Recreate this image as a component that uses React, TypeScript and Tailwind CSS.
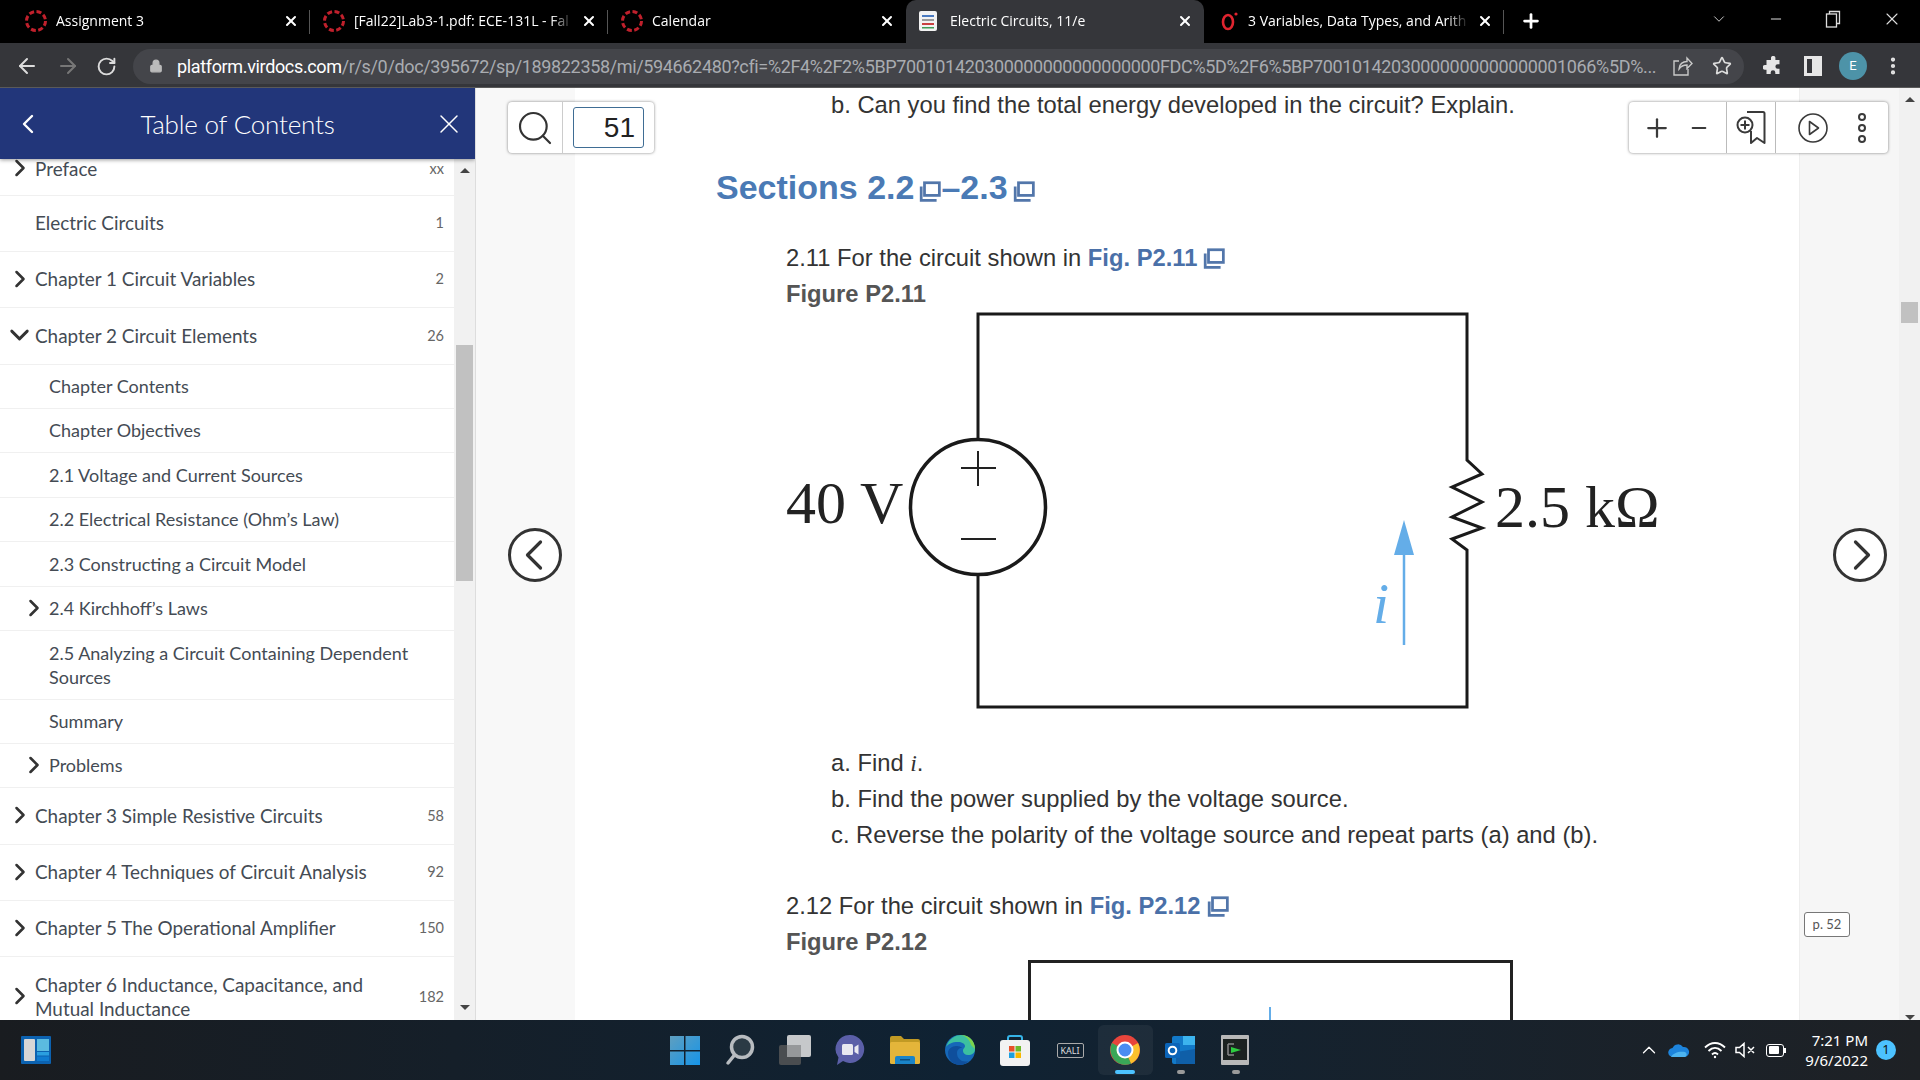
import React from "react";
import {
  ArrowLeft,
  ArrowRight,
  ChevronDown,
  ChevronLeft,
  ChevronRight,
  ChevronUp,
  EllipsisVertical,
  Lock,
  Minus,
  Plus,
  RotateCw,
  Search,
  Star,
  X,
} from "lucide-react";

type TocRow = {
  title: React.ReactNode;
  page?: string;
  sub?: boolean;
  chevron?: "right" | "down";
  rowClass: string;
};

const tocRows: TocRow[] = [
  { title: "Preface", page: "xx", chevron: "right", rowClass: "h-[37px] pb-[17px] leading-[18px]!" },
  { title: "Electric Circuits", page: "1", rowClass: "h-[56px]" },
  { title: "Chapter 1 Circuit Variables", page: "2", chevron: "right", rowClass: "h-[56px]" },
  { title: "Chapter 2 Circuit Elements", page: "26", chevron: "down", rowClass: "h-[57px]" },
  { title: "Chapter Contents", sub: true, rowClass: "h-[44px]" },
  { title: "Chapter Objectives", sub: true, rowClass: "h-[44px]" },
  { title: "2.1 Voltage and Current Sources", sub: true, rowClass: "h-[45px]" },
  { title: "2.2 Electrical Resistance (Ohm’s Law)", sub: true, rowClass: "h-[44px]" },
  { title: "2.3 Constructing a Circuit Model", sub: true, rowClass: "h-[45px]" },
  { title: "2.4 Kirchhoff’s Laws", sub: true, chevron: "right", rowClass: "h-[44px]" },
  { title: "2.5 Analyzing a Circuit Containing Dependent Sources", sub: true, rowClass: "h-[69px]" },
  { title: "Summary", sub: true, rowClass: "h-[44px]" },
  { title: "Problems", sub: true, chevron: "right", rowClass: "h-[44px]" },
  { title: "Chapter 3 Simple Resistive Circuits", page: "58", chevron: "right", rowClass: "h-[57px]" },
  { title: "Chapter 4 Techniques of Circuit Analysis", page: "92", chevron: "right", rowClass: "h-[56px]" },
  { title: "Chapter 5 The Operational Amplifier", page: "150", chevron: "right", rowClass: "h-[56px]" },
  { title: "Chapter 6 Inductance, Capacitance, and Mutual Inductance", page: "182", chevron: "right", rowClass: "h-[81px]" },
];

const CanvasIcon = () => (
  <svg width="24" height="24" viewBox="0 0 24 24" fill="none">
    <circle cx="12" cy="12" r="9.5" stroke="#c0202c" strokeWidth="3" strokeDasharray="5 2.5" />
  </svg>
);

const DocIcon = () => (
  <svg width="20" height="24" viewBox="0 0 20 24">
    <rect x="1" y="2" width="18" height="20" rx="2" fill="#f2f2f2" />
    <rect x="4" y="6" width="12" height="2" fill="#4a7ac0" />
    <rect x="4" y="10" width="12" height="2" fill="#9a9a9a" />
    <rect x="4" y="14" width="12" height="2" fill="#c94040" />
    <rect x="4" y="18" width="12" height="1.5" fill="#3f9a55" />
  </svg>
);

const OperaIcon = () => (
  <svg width="22" height="24" viewBox="0 0 22 24" fill="none" className="ml-[4px]">
    <ellipse cx="8" cy="13" rx="5" ry="7" stroke="#e0242f" strokeWidth="2.6" />
    <circle cx="16" cy="5" r="1.6" fill="#e0242f" />
  </svg>
);

function Tab({
  icon,
  title,
  active,
  separator,
  className,
}: {
  icon: React.ReactNode;
  title: string;
  active?: boolean;
  separator?: boolean;
  className?: string;
}) {
  return (
    <div
      className={`relative flex h-[43px] w-[298px] shrink-0 items-center pb-[2px] pl-[12px] pr-[11px] ${
        active ? "rounded-t-[10px] bg-[#35363a]" : ""
      } ${className ?? ""}`}
    >
      <div className="flex w-[32px] shrink-0 items-center">{icon}</div>
      <div className="min-w-0 flex-1 overflow-hidden whitespace-nowrap text-[14px] text-white [mask-image:linear-gradient(to_right,black_90%,transparent)]">
        {title}
      </div>
      <X size={16} strokeWidth={3} className="ml-[8px] shrink-0 text-white" />
      {separator && <div className="absolute right-0 top-[10px] h-[24px] w-px bg-[#555]" />}
    </div>
  );
}

function TabStrip() {
  return (
    <div className="flex h-[43px] shrink-0 items-start bg-black pl-[12px] font-['Open_Sans',sans-serif]">
      <Tab icon={<CanvasIcon />} title="Assignment 3" separator />
      <Tab icon={<CanvasIcon />} title="[Fall22]Lab3-1.pdf: ECE-131L - Fal" separator />
      <Tab icon={<CanvasIcon />} title="Calendar" />
      <Tab icon={<DocIcon />} title="Electric Circuits, 11/e" active />
      <Tab icon={<OperaIcon />} title="3 Variables, Data Types, and Arith" separator className="w-[300px]" />
      <div className="flex h-[43px] w-[54px] items-center justify-center pb-[2px]">
        <Plus size={22} strokeWidth={3} className="text-white" />
      </div>
      <div className="ml-auto flex h-[38px] items-center pr-[18px] text-[#ddd]">
        <ChevronDown size={18} strokeWidth={1.2} className="mr-[40px]" />
        <Minus size={16} strokeWidth={1.5} className="mr-[41px]" />
        <svg width="16" height="18" viewBox="0 0 16 18" fill="none" stroke="currentColor" className="mr-[41px]" strokeWidth="1.3">
          <rect x="1.5" y="4" width="10" height="13" />
          <path d="M4.5 4V1.5h10v12h-3" />
        </svg>
        <X size={20} strokeWidth={1.3} />
      </div>
    </div>
  );
}

function AddressBar() {
  return (
    <div className="flex h-[45px] shrink-0 items-center border-b border-[#5a5a5a] bg-[#35363a] pl-[15px] pt-[2px] font-['Roboto',sans-serif]">
      <ArrowLeft size={24} strokeWidth={2} className="mr-[17px] text-[#dcdcdc]" />
      <ArrowRight size={24} strokeWidth={2} className="mr-[16px] text-[#777]" />
      <RotateCw size={21} strokeWidth={2.2} className="text-[#dcdcdc]" />
      <div className="ml-[16px] flex h-[35px] w-[1611px] items-center overflow-hidden rounded-full bg-[#44454a] pl-[16px] pr-[8px]">
        <Lock size={14} fill="#bbb" strokeWidth={2} className="mr-[14px] shrink-0 text-[#bbb]" />
        <div className="w-[1480px] shrink-0 whitespace-nowrap text-[18px] tracking-[-0.35px] text-[#a9acb1]">
          <span className="text-white">platform.virdocs.com</span>
          /r/s/0/doc/395672/sp/189822358/mi/594662480?cfi=%2F4%2F2%5BP700101420300000000000000000FDC%5D%2F6%5BP70010142030000000000000001066%5D%...
        </div>
        <svg width="22" height="22" viewBox="0 0 22 22" fill="none" stroke="#c9c9c9" strokeWidth="1.4" className="ml-[14px] shrink-0">
          <path d="M8 6H3v14h14v-6" />
          <path d="M8 14c0-5 4-7.500 8-7.500V3l5 5.500-5 5V10c-4 0-6 1-8 4z" />
        </svg>
        <Star size={20} strokeWidth={2} className="ml-[19px] shrink-0 text-[#dcdcdc]" />
      </div>
      <svg width="20" height="20" viewBox="0 0 20 20" className="ml-[19px] text-[#e6e6e6]" fill="currentColor">
        <path d="M8 1.5a2.3 2.3 0 0 1 4.4 0V4h4.1v4.2h-1.8a2.3 2.3 0 0 0 0 4.6h1.8V18H12.300v-1.500a2.300 2.300 0 0 0-4.600 0V18H3.500v-4.300H2a2.300 2.300 0 0 1 0-4.600h1.500V4H8z" />
      </svg>
      <div className="ml-[21px] flex h-[20px] w-[18px] justify-end border-[3px] border-[#e6e6e6]">
        <div className="h-full w-[7px] bg-[#e6e6e6]" />
      </div>
      <div className="ml-[17px] flex h-[28px] w-[28px] items-center justify-center rounded-full bg-[#4d93a8] text-[13px] text-white">E</div>
      <EllipsisVertical size={22} strokeWidth={2.6} className="ml-[15px] text-[#e6e6e6]" />
    </div>
  );
}

function Sidebar() {
  return (
    <aside className="flex w-[476px] shrink-0 flex-col overflow-hidden border-r border-[#ddd] bg-white font-['Lato',sans-serif]">
      <div className="relative z-10 flex h-[71px] shrink-0 items-center justify-between bg-[#22367a] pl-[12px] pr-[10px] text-white shadow-[0_1px_4px_rgba(0,0,0,0.4)]">
        <ChevronLeft size={32} strokeWidth={1.8} />
        <div className="pr-[2px] pt-[2px] text-[26px] font-light tracking-[-0.2px]">Table of Contents</div>
        <X size={32} strokeWidth={1.1} />
      </div>
      <div className="flex min-h-0 flex-1">
        <div className="min-w-0 flex-1 overflow-hidden">
          {tocRows.map((row, i) => (
            <div
              key={i}
              className={`flex items-center border-b border-[#f0f0f0] pr-[10px] leading-[24.500px] text-[#444b54] ${row.rowClass} ${
                row.sub ? "pl-[18px] text-[18px]" : "pl-[4px] text-[18.900px]"
              }`}
            >
              <div className="flex w-[31px] shrink-0 justify-center text-[#333]">
                {row.chevron === "right" && <ChevronRight size={28} strokeWidth={2.2} className="-mt-[2px]" />}
                {row.chevron === "down" && <ChevronDown size={32} strokeWidth={2.2} className="-mt-[2px]" />}
              </div>
              <div className={`flex-1 ${row.sub ? "pr-[30px]" : "pr-[40px]"}`}>{row.title}</div>
              {row.page && <div className="text-[14.500px] text-[#666]">{row.page}</div>}
            </div>
          ))}
        </div>
        <div className="flex w-[21px] shrink-0 flex-col items-center bg-[#f1f1f1]">
          <div className="mt-[9px] h-0 w-0 border-x-[5px] border-b-[5px] border-x-transparent border-b-[#444]" />
          <div className="mt-[172px] h-[236px] w-[17px] bg-[#c1c1c1]" />
          <div className="mt-[424px] h-0 w-0 border-x-[5px] border-t-[5px] border-x-transparent border-t-[#444]" />
        </div>
      </div>
    </aside>
  );
}

const LinkBox = ({ size = 22, gap = "ml-[6px]" }: { size?: number; gap?: string }) => (
  <svg width={size} height={size} viewBox="0 0 20 20" fill="none" className={`${gap} inline-block align-[-3px]`} stroke="#5276aa">
    <path d="M2 6v12.500h14" strokeWidth="2.500" />
    <rect x="5" y="2.500" width="13.500" height="11.500" strokeWidth="2.500" />
  </svg>
);

function CircuitFigure() {
  return (
    <svg width="900" height="400" viewBox="786 312 900 400" className="block">
      <path
        d="M978 314H1467V460l15 14-30 13 30 15-30 15 30 11-30 11 15 11V707H978Z"
        fill="none"
        stroke="#1a1a1a"
        strokeWidth="3"
      />
      <circle cx="978" cy="507" r="67.500" fill="white" stroke="#1a1a1a" strokeWidth="3.500" />
      <path d="M978 451v35M961 468h35M961 539h35" stroke="#222" strokeWidth="2" />
      <path d="M1404 555v90" stroke="#64ade8" strokeWidth="2.500" />
      <path d="M1404 520l10 35h-20z" fill="#64ade8" />
      <text x="786" y="523" fontFamily="'Liberation Serif', serif" fontSize="60" fill="#222">40 V</text>
      <text x="1495" y="527" fontFamily="'Liberation Serif', serif" fontSize="60" fill="#222">2.5 kΩ</text>
      <text x="1373" y="623" fontFamily="'Liberation Serif', serif" fontStyle="italic" fontSize="58" fill="#64ade8">i</text>
    </svg>
  );
}

function ReaderPage() {
  return (
    <div className="relative min-w-0 flex-1 overflow-hidden font-['Liberation_Sans',Arial,sans-serif]">
      <div className="absolute inset-y-0 left-0 w-[99px] bg-[#f8f8f8]" />
      <div className="absolute inset-y-0 right-0 w-[121px] border-l border-[#eee] bg-[#f6f6f6]">
        <div className="absolute inset-y-0 right-0 flex w-[21px] flex-col items-center bg-[#f1f1f1]">
          <div className="mt-[9px] h-0 w-0 border-x-[5px] border-b-[5px] border-x-transparent border-b-[#444]" />
          <div className="mt-[200px] h-[26px] w-[17px] bg-[#c1c1c1]" />
          <div className="mt-[692px] h-0 w-0 border-x-[5px] border-t-[5px] border-x-transparent border-t-[#444]" />
        </div>
      </div>

      <div className="relative ml-[99px] flex h-full flex-col text-[23.750px] leading-[36px] text-[#333]">
        <p className="-mt-[1px] ml-[256px]">b. Can you find the total energy developed in the circuit? Explain.</p>
        <h2 className="ml-[141px] mt-[46px] text-[34px] font-bold leading-[36px] text-[#4a7ab5]">
          Sections 2.2
          <LinkBox size={22} gap="ml-[5px]" />–2.3
          <LinkBox size={22} gap="ml-[5px]" />
        </h2>
        <div className="ml-[211px] mt-[35px]">
          <p>
            2.11 For the circuit shown in <b className="text-[#4a70a8]">Fig. P2.11</b>
            <LinkBox />
          </p>
          <p className="font-bold text-[#555]">Figure P2.11</p>
          <CircuitFigure />
        </div>
        <div className="ml-[256px] mt-[33px]">
          <p>
            a. Find <i className="font-['Liberation_Serif',serif]">i</i>.
          </p>
          <p>b. Find the power supplied by the voltage source.</p>
          <p>c. Reverse the polarity of the voltage source and repeat parts (a) and (b).</p>
        </div>
        <div className="ml-[211px] mt-[35px]">
          <p>
            2.12 For the circuit shown in <b className="text-[#4a70a8]">Fig. P2.12</b>
            <LinkBox />
          </p>
          <p className="font-bold text-[#555]">Figure P2.12</p>
          <div className="relative ml-[242px] h-[100px] w-[485px] border-[3px] border-[#222] border-b-0">
            <div className="absolute left-[238px] top-[44px] h-[60px] w-[2px] bg-[#64ade8]" />
          </div>
        </div>
      </div>

      {/* floating reader controls */}
      <div className="absolute left-[32px] top-[14px] flex h-[51px] w-[146px] items-center rounded-[4px] bg-white shadow-[0_0_3px_rgba(0,0,0,0.5)]">
        <div className="flex h-full w-[55px] items-center justify-center border-r border-[#ccc]">
          <Search size={40} strokeWidth={1.3} className="text-[#333]" />
        </div>
        <div className="ml-[10px] flex h-[41px] w-[71px] items-center justify-end rounded-[3px] border border-[#3f6d94] pr-[8px] text-[28px] text-[#222]">51</div>
      </div>

      <div className="absolute left-[1153px] top-[14px] flex h-[51px] w-[259px] items-center rounded-[4px] bg-white text-[#3a3a3a] shadow-[0_0_3px_rgba(0,0,0,0.5)]">
        <div className="flex h-full w-[98px] items-center justify-center gap-[16px] border-r border-[#bbb] pr-[4px]">
          <Plus size={30} strokeWidth={1.8} />
          <Minus size={22} strokeWidth={2} />
        </div>
        <div className="flex h-full w-[49px] items-center justify-center border-r border-[#bbb]">
          <svg width="30" height="36" viewBox="0 0 30 36" fill="none" stroke="currentColor" strokeWidth="2" strokeLinejoin="round">
            <path d="M11 2h16a1.500 1.500 0 0 1 1.500 1.500V33l-7.500-5-6 5V21" />
            <circle cx="9" cy="15" r="7.500" fill="white" />
            <path d="M4.500 15h9M9 10.500v9" />
          </svg>
        </div>
        <div className="flex flex-1 items-center pl-[22px]">
          <svg width="30" height="30" viewBox="0 0 30 30" fill="none" stroke="currentColor" strokeWidth="1.600">
            <circle cx="15" cy="15" r="14" />
            <path d="M11.500 8.500v13l9-6.500z" strokeLinejoin="round" />
          </svg>
          <div className="ml-[30px] flex flex-col gap-[3px]">
            <div className="h-[8px] w-[8px] rounded-full border-2 border-current" />
            <div className="h-[8px] w-[8px] rounded-full border-2 border-current" />
            <div className="h-[8px] w-[8px] rounded-full border-2 border-current" />
          </div>
        </div>
      </div>

      <button className="absolute left-[32px] top-[440px] flex h-[54px] w-[54px] items-center justify-center rounded-full border-[3px] border-[#333] bg-white text-[#333]">
        <ChevronLeft size={52} strokeWidth={1.5} className="-ml-[3px] shrink-0" />
      </button>
      <button className="absolute left-[1357px] top-[440px] flex h-[54px] w-[54px] items-center justify-center rounded-full border-[3px] border-[#333] bg-white text-[#333]">
        <ChevronRight size={52} strokeWidth={1.5} className="ml-[3px] shrink-0" />
      </button>
      <div className="absolute left-[1328px] top-[824px] flex h-[25px] w-[46px] items-center justify-center rounded-[3px] border border-[#777] bg-white font-['Lato',sans-serif] text-[13px] text-[#555]">
        p. 52
      </div>
    </div>
  );
}

function TaskIcon({ children, active, dot }: { children: React.ReactNode; active?: boolean; dot?: boolean }) {
  return (
    <div className={`relative flex h-[50px] w-[55px] items-center justify-center ${active ? "rounded-[6px] bg-white/5" : ""}`}>
      {children}
      {active && <div className="absolute bottom-[1px] left-[17px] h-[4px] w-[20px] rounded-full bg-[#4cc2ff]" />}
      {dot && <div className="absolute bottom-[1px] left-[24px] h-[4px] w-[8px] rounded-full bg-[#9a9a9a]" />}
    </div>
  );
}

function Taskbar() {
  return (
    <div className="grid h-[60px] shrink-0 grid-cols-[1fr_auto_1fr] items-center bg-gradient-to-r from-[#191c20] via-[#0f2233] to-[#1e2125] font-['Noto_Sans',sans-serif]">
      <div className="pl-[21px]">
        <svg width="30" height="28" viewBox="0 0 30 28">
          <rect width="30" height="28" rx="1" fill="#0c62b0" />
          <rect x="3" y="3" width="11" height="22" rx="1" fill="#d6d6d6" />
          <rect x="16" y="3" width="12" height="12" fill="#5bbbe0" />
          <rect x="16" y="16" width="12" height="3.500" fill="#2a9fe0" />
          <rect x="16" y="20.500" width="12" height="4.500" fill="#0f7bd0" />
        </svg>
      </div>
      <div className="flex items-center">
        <TaskIcon>
          <svg width="30" height="30" viewBox="0 0 30 30">
            <defs>
              <linearGradient id="winGrad" x1="0" y1="0" x2="1" y2="1">
                <stop offset="0" stopColor="#5f9fc0" />
                <stop offset="1" stopColor="#1594e8" />
              </linearGradient>
            </defs>
            <path d="M0 1h14v14H0zM15.500 1H30v14H15.500zM0 16.500h14V30.500H0zM15.500 16.500H30V30.500H15.500z" fill="url(#winGrad)" />
          </svg>
        </TaskIcon>
        <TaskIcon>
          <svg width="30" height="32" viewBox="0 0 30 32" fill="none" stroke="#b8bcc0" strokeWidth="3.500">
            <circle cx="17" cy="13" r="10.500" fill="#2b3a45" />
            <path d="M9.500 21L3 29" strokeLinecap="round" />
          </svg>
        </TaskIcon>
        <TaskIcon>
          <svg width="32" height="30" viewBox="0 0 32 30">
            <rect x="0" y="10" width="22" height="20" rx="2" fill="#4a4d50" />
            <rect x="8" y="0" width="24" height="22" rx="2" fill="#c6c8ca" />
            <rect x="8" y="10" width="14" height="12" fill="#96989a" />
          </svg>
        </TaskIcon>
        <TaskIcon>
          <svg width="30" height="32" viewBox="0 0 30 32">
            <path d="M15 1a14 14 0 1 1-7 26l-6 4 1.500-7.500A14 14 0 0 1 15 1z" fill="#5b5fa8" />
            <rect x="7" y="10" width="11" height="11" rx="1.500" fill="#e8e8f0" />
            <path d="M19.500 13l4-2.500v10l-4-2.500z" fill="#e8e8f0" />
          </svg>
        </TaskIcon>
        <TaskIcon>
          <svg width="30" height="28" viewBox="0 0 30 28">
            <path d="M0 2a2 2 0 0 1 2-2h9l3 3h14a2 2 0 0 1 2 2v3H0z" fill="#c19a24" />
            <rect y="6" width="30" height="22" rx="1.500" fill="#e4b53a" />
            <path d="M5 28v-6a2 2 0 0 1 2-2h16a2 2 0 0 1 2 2v6z" fill="#1a84c8" />
            <rect x="10" y="23" width="10" height="1.500" fill="#0c4f80" />
          </svg>
        </TaskIcon>
        <TaskIcon>
          <svg width="30" height="30" viewBox="0 0 30 30">
            <circle cx="15" cy="15" r="15" fill="#1668b8" />
            <path d="M1 12C4 3 11 0 16 0c8 0 14 6 14 14 0 4-3 6-7 6-3 0-5-2-5-4 0-3 2-3 2-5s-3-4-7-4C7 7 3 9 1 12z" fill="#3cc0a0" />
            <path d="M30 14c0-8-6-14-14-14 5 1 9 5 10 10l4 4z" fill="#7dd34b" />
            <path d="M12 18c0 6 5 10 12 8-3 2.500-6 4-9 4C8 30 3 25 3 18c0-4 4-7 8-7 3 0 6 1 6 2-3 0-5 2-5 5z" fill="#0f4f9c" />
          </svg>
        </TaskIcon>
        <TaskIcon>
          <svg width="30" height="32" viewBox="0 0 30 32">
            <path d="M8 7V4a2 2 0 0 1 2-2h10a2 2 0 0 1 2 2v3" fill="none" stroke="#35b4e8" strokeWidth="2" />
            <rect y="6" width="30" height="26" rx="3" fill="#f2f2f2" />
            <rect x="9" y="12" width="5.500" height="5.500" fill="#e8502a" />
            <rect x="15.500" y="12" width="5.500" height="5.500" fill="#6cb82c" />
            <rect x="9" y="18.500" width="5.500" height="5.500" fill="#1c9fe0" />
            <rect x="15.500" y="18.500" width="5.500" height="5.500" fill="#f8b800" />
          </svg>
        </TaskIcon>
        <TaskIcon>
          <div className="flex h-[15px] w-[27px] items-center justify-center rounded-[2px] border border-[#aaa] text-[9px] leading-none text-[#ddd]">KALI</div>
        </TaskIcon>
        <TaskIcon active>
          <svg width="30" height="30" viewBox="0 0 30 30" className="-mt-[1px]">
            <circle cx="15" cy="15" r="15" fill="#e8453c" />
            <path d="M15 15L28 8a15 15 0 0 1-7 20.700z" fill="#fbc02d" />
            <path d="M15 15L21 28.700A15 15 0 0 1 2 8z" fill="#3aa757" />
            <circle cx="15" cy="15" r="7.500" fill="#4a8cf0" stroke="white" strokeWidth="2" />
          </svg>
        </TaskIcon>
        <TaskIcon dot>
          <svg width="30" height="30" viewBox="0 0 30 30">
            <rect x="7" y="1" width="23" height="28" rx="2" fill="#1279c8" />
            <rect x="18" y="1" width="12" height="9" fill="#3cb4ee" />
            <path d="M11 17l19-3v15H11z" fill="#0f5fa8" />
            <rect x="0" y="8" width="15" height="15" rx="1.500" fill="#0b64b8" />
            <circle cx="7.500" cy="15.500" r="3.800" fill="none" stroke="white" strokeWidth="2" />
          </svg>
        </TaskIcon>
        <TaskIcon dot>
          <svg width="28" height="30" viewBox="0 0 28 30">
            <rect width="28" height="30" rx="1" fill="#b8b8b8" />
            <rect x="2" y="4" width="24" height="21" fill="#1c2220" />
            <path d="M7 9v11M7 9h6M7 20h6" stroke="#888" strokeWidth="1.500" fill="none" />
            <path d="M10 12l10 3-10 3z" fill="#2ecc40" />
          </svg>
        </TaskIcon>
      </div>
      <div className="flex items-center justify-end pr-[24px] text-white">
        <ChevronUp size={22} strokeWidth={1.4} />
        <svg width="22" height="14" viewBox="0 0 22 14" className="ml-[8px]">
          <path d="M5 14a4.500 4.500 0 0 1-.5-9A6 6 0 0 1 15 4a4.500 4.500 0 0 1 2 10z" fill="#1d84dc" />
          <path d="M3 14c2-4 8-6 14-5a2.700 2.700 0 0 1 0 5z" fill="#4db4f0" />
        </svg>
        <svg width="22" height="18" viewBox="0 0 22 18" fill="none" stroke="white" strokeWidth="1.800" className="ml-[14px]">
          <path d="M1 6.500c6-6 14-6 20 0M4.500 10c4-4 9-4 13 0M8 13.500c2-2 4-2 6 0" />
          <circle cx="11" cy="16" r="1.200" fill="white" stroke="none" />
        </svg>
        <svg width="20" height="16" viewBox="0 0 20 16" fill="none" stroke="white" strokeWidth="1.500" className="ml-[9px]">
          <path d="M1 5.500h3.500L9 1.500v13l-4.500-4H1zM13 5l6 6M19 5l-6 6" />
        </svg>
        <div className="ml-[11px] flex h-[13px] w-[18px] items-center rounded-[3px] border-[1.500px] border-white p-[1.500px]">
          <div className="h-full w-[10px] rounded-[1px] bg-white" />
        </div>
        <div className="h-[5px] w-[2px] bg-white" />
        <div className="-mt-[1px] ml-[19px] text-right text-[15px] leading-[20px]">
          <div>7:21 PM</div>
          <div>9/6/2022</div>
        </div>
        <div className="ml-[8px] flex h-[20px] w-[20px] items-center justify-center rounded-full bg-[#4cc2ff] text-[13px] text-[#111]">1</div>
      </div>
    </div>
  );
}

export default function App() {
  return (
    <div className="flex h-[1080px] w-[1920px] flex-col overflow-hidden bg-white">
      <TabStrip />
      <AddressBar />
      <div className="flex min-h-0 flex-1">
        <Sidebar />
        <ReaderPage />
      </div>
      <Taskbar />
    </div>
  );
}
